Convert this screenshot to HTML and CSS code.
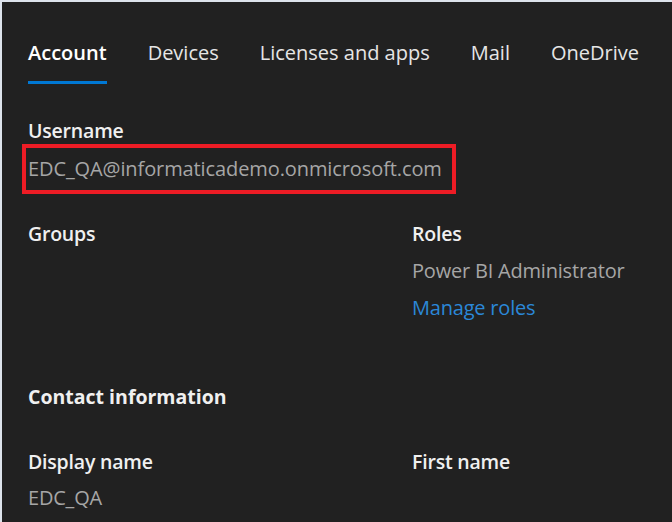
FILE: index.html
```html
<!DOCTYPE html>
<html>
<head>
<meta charset="utf-8">
<link rel="stylesheet" href="styles.css">
</head>
<body>
<div class="panel">
  <nav class="tabs">
    <div class="tab active">Account</div>
    <div class="tab">Devices</div>
    <div class="tab">Licenses and apps</div>
    <div class="tab">Mail</div>
    <div class="tab">OneDrive</div>
  </nav>
  <section class="username">
    <div class="label">Username</div>
    <div class="highlight"><span class="value email">EDC_QA@informaticademo.onmicrosoft.com</span></div>
  </section>
  <section class="grid two">
    <div class="col">
      <div class="label">Groups</div>
    </div>
    <div class="col">
      <div class="label">Roles</div>
      <div class="value">Power BI Administrator</div>
      <a class="link">Manage roles</a>
    </div>
  </section>
  <h2 class="section-title">Contact information</h2>
  <section class="grid contact">
    <div class="col">
      <div class="label">Display name</div>
      <div class="value">EDC_QA</div>
    </div>
    <div class="col">
      <div class="label">First name</div>
    </div>
  </section>
</div>
</body>
</html>
```
FILE: styles.css
```css
html, body {
  margin: 0;
  padding: 0;
}
body {
  background: #dde3ec;
  width: 672px;
  height: 522px;
  overflow: hidden;
  font-family: "Open Sans", "Noto Sans", sans-serif;
}
.panel {
  margin: 2px 0 0 2px;
  height: 520px;
  background: #212121;
  padding: 0 0 0 26px;
  box-sizing: border-box;
  overflow: hidden;
}
.tabs {
  display: flex;
  gap: 41px;
  padding-top: 36px;
}
.tab {
  flex-shrink: 0;
  white-space: nowrap;
  color: #e6e6e6;
  font-size: 20px;
  line-height: 30px;
  padding-bottom: 13px;
  border-bottom: 3px solid transparent;
}
.tab.active {
  font-weight: 600;
  border-bottom-color: #0078d4;
  color: #ffffff;
}
.label {
  color: #f0f0f0;
  font-size: 19.5px;
  font-weight: 600;
  line-height: 26px;
  letter-spacing: -0.2px;
  white-space: nowrap;
}
.value {
  color: #a6a6a6;
  font-size: 20px;
  line-height: 26px;
  letter-spacing: -0.2px;
  white-space: nowrap;
}
.value.email {
  letter-spacing: -0.1px;
}
.username {
  margin-top: 34px;
}
.highlight {
  margin-left: -6px;
  width: 434px;
  height: 50px;
  box-sizing: border-box;
  border: 4px solid #ee1c25;
  display: flex;
  align-items: center;
  padding-left: 2px;
}
.grid {
  display: grid;
  grid-template-columns: 384px 1fr;
}
.two {
  margin-top: 27px;
}
.two .col {
  display: flex;
  flex-direction: column;
  gap: 11px;
}
.link {
  color: #2b88d8;
  font-size: 20px;
  line-height: 26px;
  letter-spacing: -0.2px;
  white-space: nowrap;
}
.section-title {
  margin: 63px 0 0;
  color: #f0f0f0;
  font-size: 19.5px;
  font-weight: 700;
  line-height: 26px;
  white-space: nowrap;
}
.contact {
  margin-top: 39px;
}
.contact .col {
  display: flex;
  flex-direction: column;
  gap: 10px;
}
```
